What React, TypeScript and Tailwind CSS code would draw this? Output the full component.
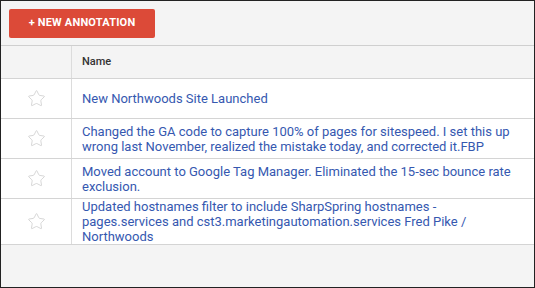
import { Star } from "lucide-react"

const rows = [
  "New Northwoods Site Launched",
  "Changed the GA code to capture 100% of pages for sitespeed. I set this up wrong last November, realized the mistake today, and corrected it.FBP",
  "Moved account to Google Tag Manager. Eliminated the 15-sec bounce rate exclusion.",
  "Updated hostnames filter to include SharpSpring hostnames - pages.services and cst3.marketingautomation.services Fred Pike / Northwoods",
]

export default function App() {
  return (
    <div className="w-[535px] h-[288px] bg-[#f4f4f4] border border-[#222] overflow-hidden font-['Roboto',sans-serif] flex flex-col">
      <div className="h-[44px] pl-[8px] pt-[8px] shrink-0">
        <button className="h-[29px] w-[146px] bg-[#dc4a38] text-white text-[11px] font-bold rounded-[2px] tracking-[0.2px]">
          + NEW ANNOTATION
        </button>
      </div>
      <div className="border-t border-[#cfcfcf]">
        <div className="flex h-[33px] border-b border-[#d4d4d4] bg-[#f4f4f4]">
          <div className="w-[71px] border-r border-[#dcdcdc]" />
          <div className="flex items-center pl-[10px] text-[11px] font-medium text-[#333]">Name</div>
        </div>
        {rows.map((text, i) => (
          <div key={i} className="flex min-h-[40px] bg-white border-b border-[#d4d4d4]">
            <div className="w-[71px] shrink-0 border-r border-[#dcdcdc] flex items-center justify-center">
              <Star className="size-[19px] text-[#cccccc]" strokeWidth={1} />
            </div>
            <div className="flex items-center pl-[10px] pr-[14px] text-[13px] leading-[15px] text-[#3558b0]">
              {text}
            </div>
          </div>
        ))}
      </div>
    </div>
  )
}
